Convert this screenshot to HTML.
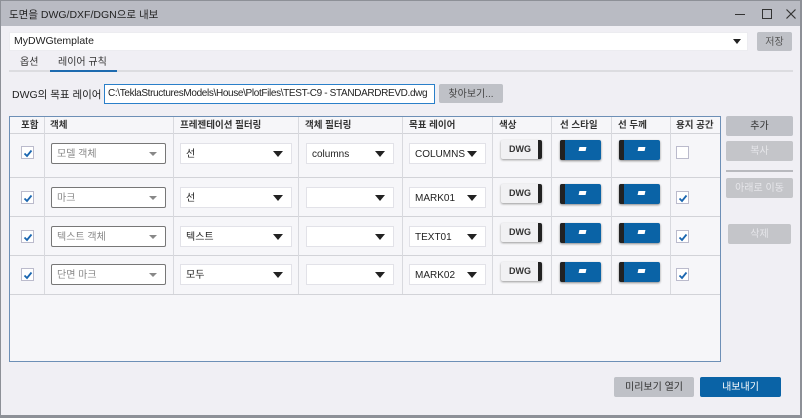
<!DOCTYPE html>
<html><head><meta charset="utf-8"><style>
*{box-sizing:border-box;margin:0;padding:0}
body{width:802px;height:418px;overflow:hidden;background:#8d9097;font-family:"Liberation Sans","Noto Sans CJK KR",sans-serif;font-size:10px;color:#222;position:relative}
.a{position:absolute;white-space:nowrap}
#win{position:absolute;left:1px;top:1px;width:799px;height:414px;background:#f0eff4}
#title{position:absolute;left:1px;top:1px;width:799px;height:25px;background:#b9bbc3}
.cb{position:absolute;background:#fff;border:1px solid #e2e2e8;height:21px;line-height:21px;padding-left:5px;font-size:10px;white-space:nowrap}
.cb.o{border:1px solid #777;border-radius:2px;color:#888}
.cb:after{content:"";position:absolute;right:8px;top:7px;border-left:5px solid transparent;border-right:5px solid transparent;border-top:6px solid #222}
.cb.o:after{border-top-color:#888;border-left-width:4px;border-right-width:4px;border-top-width:4px;top:8px}
.btn{position:absolute;background:#bfc1c7;border-radius:2px;text-align:center;color:#333;font-size:10px;height:20px;line-height:22px}
.dis{background:#c4c5c9;color:#e6e6ea}
.chk{position:absolute;width:13px;height:13px;background:#fff;border:1px solid #bbc;}
.chk svg{position:absolute;left:1px;top:1px}
.vl{position:absolute;width:1px;background:#d8d9de}
.hl{position:absolute;height:1px;background:#d2d3d8}
.dwg{position:absolute;width:41px;height:19px;line-height:19px;background:#f1f1f3;border-radius:2px;box-shadow:0 1px 2px #999;font-size:9px;font-weight:bold;color:#333;padding-left:8px}
.dwg:after{content:"";position:absolute;right:0;top:0;width:4px;height:19px;background:#222;border-radius:0 2px 2px 0}
.bl{position:absolute;width:41px;height:20px;background:#0a63a6;border-radius:2px;box-shadow:0 1px 2px #888}
.bl:before{content:"";position:absolute;left:0;top:0;width:5px;height:20px;background:#222;border-radius:2px 0 0 2px}
.bl:after{content:"";position:absolute;left:19px;top:7px;width:7px;height:4px;background:#fff;transform:skewX(-12deg)}
.hd{position:absolute;top:118px;line-height:16px;font-size:9.5px;font-weight:bold;color:#333;white-space:nowrap}
</style></head><body>
<div id="win"></div>
<div id="title"></div>
<div class="a" style="left:9px;top:7px;font-size:10.5px;color:#222;line-height:16px">도면을 DWG/DXF/DGN으로 내보</div>
<div class="a" style="left:735px;top:14px;width:10px;height:1px;background:#333"></div>
<div class="a" style="left:762px;top:9px;width:10px;height:10px;border:1.3px solid #333"></div>
<svg class="a" style="left:786px;top:9px" width="10" height="10"><path d="M0.5 0.5 L9.5 9.5 M9.5 0.5 L0.5 9.5" stroke="#333" stroke-width="1.2"/></svg>

<div class="a" style="left:9px;top:32px;width:739px;height:19px;background:#fff;border:1px solid #ececf0"></div>
<div class="a" style="left:14px;top:33px;font-size:10.5px;line-height:17px">MyDWGtemplate</div>
<div class="a" style="left:733px;top:39px;border-left:4px solid transparent;border-right:4px solid transparent;border-top:5px solid #222"></div>
<div class="btn" style="left:757px;top:32px;width:35px;height:19px;line-height:21px;color:#555">저장</div>

<div class="a" style="left:9px;top:70px;width:784px;height:2px;background:#dcdce0"></div>
<div class="a" style="left:20px;top:56px;font-size:10px;color:#333;line-height:14px">옵션</div>
<div class="a" style="left:58px;top:56px;font-size:10px;color:#333;line-height:14px">레이어 규칙</div>
<div class="a" style="left:50px;top:70px;width:67px;height:2px;background:#1e6bb0"></div>

<div class="a" style="left:12px;top:87px;font-size:10.5px;line-height:16px">DWG의 목표 레이어</div>
<div class="a" style="left:104px;top:84px;width:331px;height:20px;background:#fff;border:1px solid #2a7fc9;overflow:hidden"></div>
<div class="a" style="left:108px;top:85px;font-size:10px;line-height:18px;letter-spacing:-0.35px;width:325px;overflow:hidden">C:\TeklaStructuresModels\House\PlotFiles\TEST-C9 - STANDARDREVD.dwg</div>
<div class="btn" style="left:439px;top:84px;width:64px;height:19px;line-height:21px;color:#444">찾아보기...</div>

<div class="a" style="left:9px;top:116px;width:712px;height:246px;background:#f6f6f9;border:1px solid #6d8fb6"></div>
<div class="hl" style="left:10px;top:133px;width:710px"></div>
<div class="hl" style="left:10px;top:177px;width:710px"></div>
<div class="hl" style="left:10px;top:216px;width:710px"></div>
<div class="hl" style="left:10px;top:255px;width:710px"></div>
<div class="hl" style="left:10px;top:294px;width:710px"></div>
<div class="vl" style="left:44px;top:117px;height:177px"></div>
<div class="vl" style="left:173px;top:117px;height:177px"></div>
<div class="vl" style="left:298px;top:117px;height:177px"></div>
<div class="vl" style="left:402px;top:117px;height:177px"></div>
<div class="vl" style="left:492px;top:117px;height:177px"></div>
<div class="vl" style="left:551px;top:117px;height:177px"></div>
<div class="vl" style="left:611px;top:117px;height:177px"></div>
<div class="vl" style="left:670px;top:117px;height:177px"></div>
<div class="hd" style="left:21px">포함</div>
<div class="hd" style="left:50px">객체</div>
<div class="hd" style="left:180px">프레젠테이션 필터링</div>
<div class="hd" style="left:305px">객체 필터링</div>
<div class="hd" style="left:409px">목표 레이어</div>
<div class="hd" style="left:499px">색상</div>
<div class="hd" style="left:560px">선 스타일</div>
<div class="hd" style="left:618px">선 두께</div>
<div class="hd" style="left:676px">용지 공간</div>

<!-- row 1 -->
<div class="chk" style="left:21px;top:146px"><svg width="10" height="10"><path d="M1.5 5.5 L4 8 L8.5 2.5" stroke="#1a66b0" stroke-width="1.8" fill="none"/></svg></div>
<div class="cb o" style="left:51px;top:143px;width:115px">모델 객체</div>
<div class="cb" style="left:180px;top:143px;width:112px">선</div>
<div class="cb" style="left:306px;top:143px;width:88px">columns</div>
<div class="cb" style="left:409px;top:143px;width:77px">COLUMNS</div>
<div class="dwg" style="left:501px;top:140px">DWG</div>
<div class="bl" style="left:560px;top:140px"></div>
<div class="bl" style="left:619px;top:140px"></div>
<div class="chk" style="left:676px;top:146px"></div>

<!-- row 2 -->
<div class="chk" style="left:21px;top:191px"><svg width="10" height="10"><path d="M1.5 5.5 L4 8 L8.5 2.5" stroke="#1a66b0" stroke-width="1.8" fill="none"/></svg></div>
<div class="cb o" style="left:51px;top:187px;width:115px">마크</div>
<div class="cb" style="left:180px;top:187px;width:112px">선</div>
<div class="cb" style="left:306px;top:187px;width:88px"></div>
<div class="cb" style="left:409px;top:187px;width:77px">MARK01</div>
<div class="dwg" style="left:501px;top:184px">DWG</div>
<div class="bl" style="left:560px;top:184px"></div>
<div class="bl" style="left:619px;top:184px"></div>
<div class="chk" style="left:676px;top:191px"><svg width="10" height="10"><path d="M1.5 5.5 L4 8 L8.5 2.5" stroke="#1a66b0" stroke-width="1.8" fill="none"/></svg></div>

<!-- row 3 -->
<div class="chk" style="left:21px;top:230px"><svg width="10" height="10"><path d="M1.5 5.5 L4 8 L8.5 2.5" stroke="#1a66b0" stroke-width="1.8" fill="none"/></svg></div>
<div class="cb o" style="left:51px;top:226px;width:115px">텍스트 객체</div>
<div class="cb" style="left:180px;top:226px;width:112px">텍스트</div>
<div class="cb" style="left:306px;top:226px;width:88px"></div>
<div class="cb" style="left:409px;top:226px;width:77px">TEXT01</div>
<div class="dwg" style="left:501px;top:223px">DWG</div>
<div class="bl" style="left:560px;top:223px"></div>
<div class="bl" style="left:619px;top:223px"></div>
<div class="chk" style="left:676px;top:230px"><svg width="10" height="10"><path d="M1.5 5.5 L4 8 L8.5 2.5" stroke="#1a66b0" stroke-width="1.8" fill="none"/></svg></div>

<!-- row 4 -->
<div class="chk" style="left:21px;top:268px"><svg width="10" height="10"><path d="M1.5 5.5 L4 8 L8.5 2.5" stroke="#1a66b0" stroke-width="1.8" fill="none"/></svg></div>
<div class="cb o" style="left:51px;top:264px;width:115px">단면 마크</div>
<div class="cb" style="left:180px;top:264px;width:112px">모두</div>
<div class="cb" style="left:306px;top:264px;width:88px"></div>
<div class="cb" style="left:409px;top:264px;width:77px">MARK02</div>
<div class="dwg" style="left:501px;top:262px">DWG</div>
<div class="bl" style="left:560px;top:262px"></div>
<div class="bl" style="left:619px;top:262px"></div>
<div class="chk" style="left:676px;top:268px"><svg width="10" height="10"><path d="M1.5 5.5 L4 8 L8.5 2.5" stroke="#1a66b0" stroke-width="1.8" fill="none"/></svg></div>

<div class="btn" style="left:726px;top:116px;width:67px;color:#333">추가</div>
<div class="btn dis" style="left:726px;top:141px;width:67px">복사</div>
<div class="a" style="left:726px;top:170px;width:67px;height:2px;background:#b8b9be"></div>
<div class="btn dis" style="left:726px;top:178px;width:67px">아래로 이동</div>
<div class="btn dis" style="left:728px;top:224px;width:63px">삭제</div>

<div class="btn" style="left:614px;top:377px;width:80px;color:#333">미리보기 열기</div>
<div class="btn" style="left:700px;top:377px;width:81px;background:#0a63a6;color:#fff">내보내기</div>
</body></html>
